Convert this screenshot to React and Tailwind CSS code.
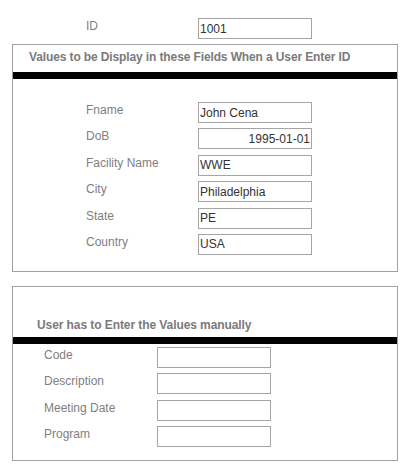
import React from 'react';

const autoFields = [
  { label: 'Fname', value: 'John Cena' },
  { label: 'DoB', value: '1995-01-01', right: true },
  { label: 'Facility Name', value: 'WWE' },
  { label: 'City', value: 'Philadelphia' },
  { label: 'State', value: 'PE' },
  { label: 'Country', value: 'USA' },
];

const manualFields = ['Code', 'Description', 'Meeting Date', 'Program'];

const Field = ({ value = '', right = false }) => (
  <input
    type="text"
    readOnly
    value={value}
    className={
      'w-[114px] h-[21px] border border-[#a5a5a5] px-[1px] text-[#333] text-[12px] leading-[14px] outline-none bg-white ' +
      (right ? 'text-right' : 'text-left')
    }
  />
);

export default function App() {
  return (
    <div className="w-[415px] h-[473px] bg-white font-['Liberation_Sans',Arial,sans-serif] text-[12px] leading-[14px] text-[#808080]">
      {/* ID lookup */}
      <div className="flex items-start pt-[18px] pl-[86px]">
        <span className="w-[112px] pt-px">ID</span>
        <Field value="1001" />
      </div>

      {/* auto-filled values */}
      <div className="mt-[5px] ml-[12px] w-[386px] h-[228px] border border-[#a0a0a0]">
        <div className="pt-[5px] pl-[16px] font-bold tracking-[-0.12px] text-[#7a7a7a]">
          Values to be Display in these Fields When a User Enter ID
        </div>
        <div className="mt-[8px] h-[7px] bg-black" />
        <div className="flex flex-col gap-[5.4px] pt-[23px] pl-[73px]">
          {autoFields.map((f) => (
            <div key={f.label} className="flex items-start">
              <span className="w-[112px] pt-px">{f.label}</span>
              <Field value={f.value} right={f.right} />
            </div>
          ))}
        </div>
      </div>

      {/* manual entry */}
      <div className="mt-[14px] ml-[12px] w-[386px] h-[175px] border border-[#a0a0a0]">
        <div className="pt-[31px] pl-[24px] font-bold tracking-[-0.08px] text-[#7a7a7a]">
          User has to Enter the Values manually
        </div>
        <div className="mt-[5px] h-[7px] bg-black" />
        <div className="flex flex-col gap-[5.4px] pt-[3px] pl-[31px]">
          {manualFields.map((label) => (
            <div key={label} className="flex items-start">
              <span className="w-[113px] pt-px">{label}</span>
              <Field />
            </div>
          ))}
        </div>
      </div>
    </div>
  );
}
